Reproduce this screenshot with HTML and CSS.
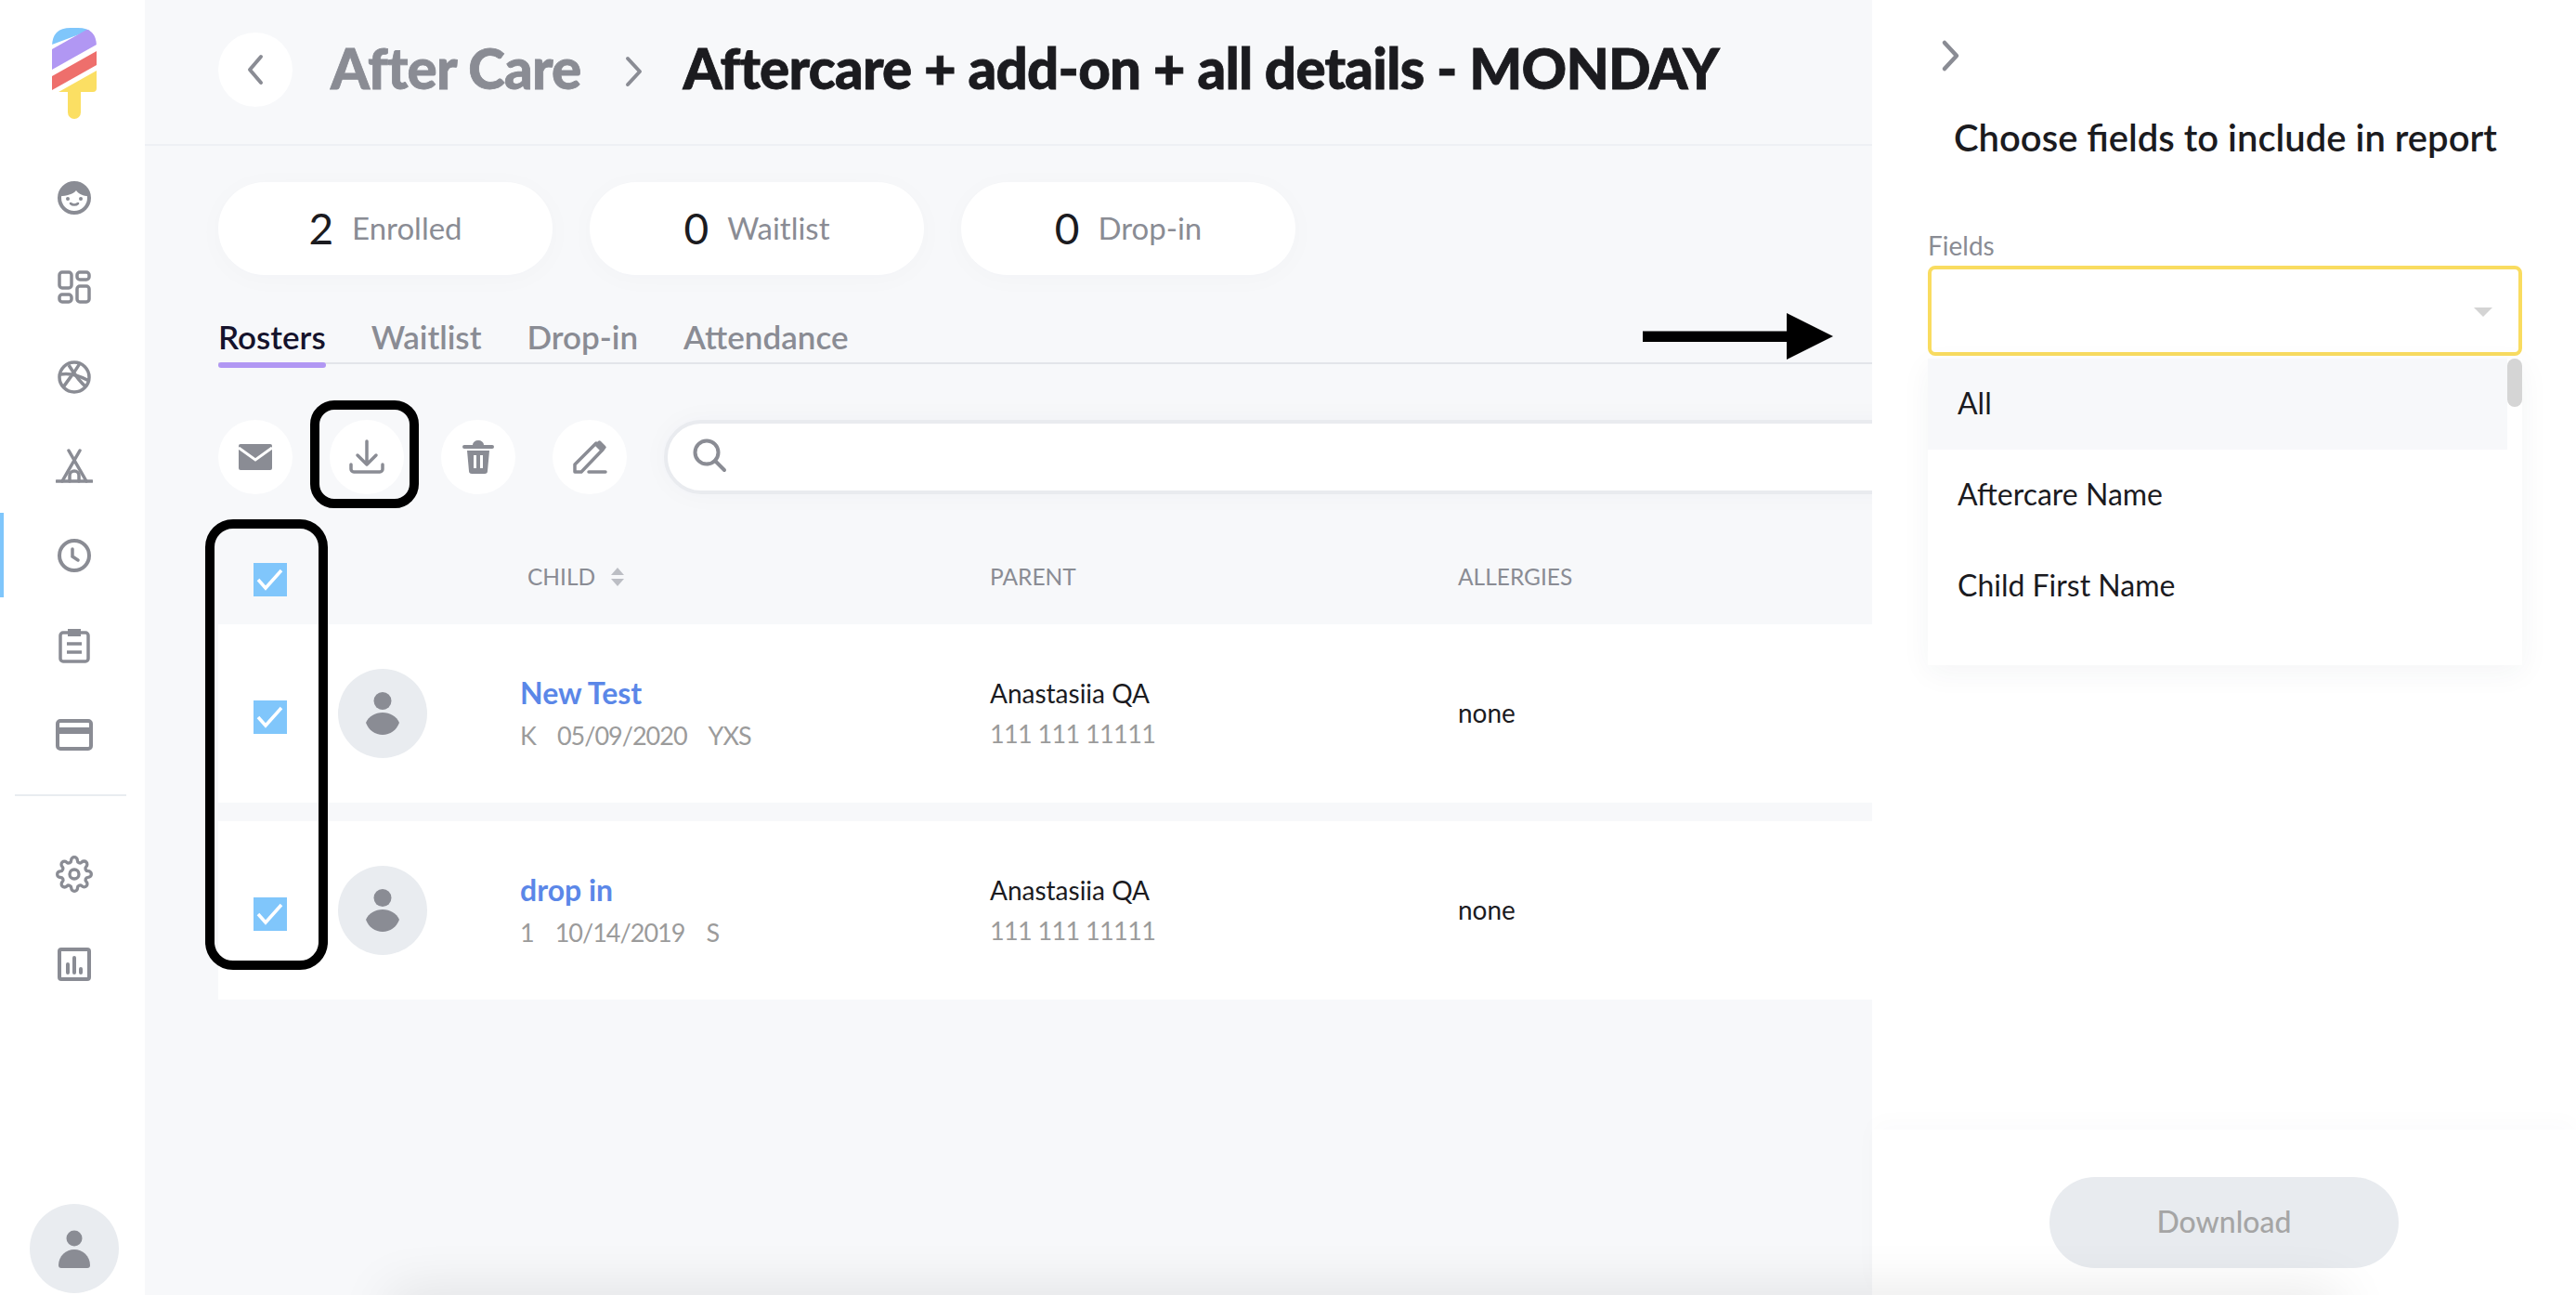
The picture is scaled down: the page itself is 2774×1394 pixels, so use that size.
FILE: index.html
```html
<!DOCTYPE html>
<html lang="en">
<head>
<meta charset="UTF-8">
<title>After Care</title>
<link rel="stylesheet" href="styles.css">
</head>
<body>
<svg class="defs" width="0" height="0">
  <symbol id="person" viewBox="0 0 36 46">
    <ellipse cx="18" cy="9.5" rx="9.5" ry="9.5" fill="currentColor"/>
    <path d="M0 33C3 26 10 22 18 22S33 26 36 33C33 41 26 46 18 46S3 41 0 33z" fill="currentColor"/>
  </symbol>
  <symbol id="check" viewBox="0 0 36 36">
    <path d="M5 18l8 9L30 8" fill="none" stroke="#fff" stroke-width="3.5"/>
  </symbol>
</svg>

<aside class="sidebar">
  <svg class="logo" width="48" height="98" viewBox="0 0 48 98">
    <defs><clipPath id="pop"><path d="M0 69V20Q0 0 20 0H28Q48 0 48 20V65Q48 69 44 69H31V91a7 7 0 0 1-14 0V69z"/></clipPath></defs>
    <g clip-path="url(#pop)">
      <polygon points="0,0 48,0 0,18" fill="#7fc6fb"/>
      <polygon points="0,23 48,-4 48,18 0,45" fill="#b197f3"/>
      <polygon points="0,52 48,25 48,40 0,67" fill="#ee6f6c"/>
      <polygon points="0,73 48,46 48,98 0,98" fill="#fbdf63"/>
    </g>
  </svg>
  <nav class="side-nav">
    <a class="side-item">
      <svg width="40" height="40" viewBox="0 0 40 40"><circle cx="20" cy="20" r="16" fill="none" stroke="currentColor" stroke-width="4"/><path d="M5 18C7 8 13 4 20 4s13 4 15 14c-5 0-10-2-13-6-3 4-11 6-17 6z" fill="currentColor"/><circle cx="13" cy="21" r="2" fill="currentColor"/><circle cx="27" cy="21" r="2" fill="currentColor"/><path d="M16 26c2 2 6 2 8 0" fill="none" stroke="currentColor" stroke-width="2.5" stroke-linecap="round"/></svg>
    </a>
    <a class="side-item">
      <svg width="40" height="40" viewBox="0 0 40 40"><g fill="none" stroke="currentColor" stroke-width="3.5"><rect x="4" y="4" width="13" height="17" rx="3"/><rect x="4" y="28" width="13" height="8" rx="3"/><rect x="23" y="4" width="13" height="8" rx="3"/><rect x="23" y="19" width="13" height="17" rx="3"/></g></svg>
    </a>
    <a class="side-item">
      <svg width="40" height="40" viewBox="0 0 40 40"><g fill="none" stroke="currentColor" stroke-width="3.5"><circle cx="20" cy="20" r="16"/><path d="M5 17c10-2 22 2 31 7M8 31C14 22 21 14 26 5"/><path d="M14 7c5 8 12 18 19 24"/></g></svg>
    </a>
    <a class="side-item">
      <svg width="40" height="40" viewBox="0 0 40 40"><g fill="none" stroke="currentColor" stroke-width="3.5" stroke-linecap="round"><path d="M1 36h38"/><path d="M14 3l19 33M26 3L7 36"/><path d="M15 36v-6a5 5 0 0 1 10 0v6"/></g></svg>
    </a>
    <a class="side-item active">
      <svg width="40" height="40" viewBox="0 0 40 40"><circle cx="20" cy="20" r="16" fill="none" stroke="currentColor" stroke-width="4"/><path d="M18 13v8l6 4" fill="none" stroke="currentColor" stroke-width="3.5" stroke-linecap="round"/></svg>
    </a>
    <a class="side-item">
      <svg width="40" height="40" viewBox="0 0 40 40"><g fill="none" stroke="currentColor" stroke-width="3.5"><rect x="5" y="6" width="30" height="31" rx="3"/><path d="M12 18h16M12 27h16"/></g><path d="M13 2h14v8H13z" fill="currentColor"/></svg>
    </a>
    <a class="side-item">
      <svg width="40" height="40" viewBox="0 0 40 40"><rect x="2" y="5" width="36" height="30" rx="3" fill="none" stroke="currentColor" stroke-width="4"/><path d="M2 12h36v7H2z" fill="currentColor"/></svg>
    </a>
  </nav>
  <div class="side-divider"></div>
  <nav class="side-nav">
    <a class="side-item">
      <svg width="40" height="40" viewBox="0 0 24 24" fill="none" stroke="currentColor" stroke-width="2"><circle cx="12" cy="12" r="3"/><path d="M19.4 15a1.65 1.65 0 0 0 .33 1.82l.06.06a2 2 0 0 1 0 2.83 2 2 0 0 1-2.83 0l-.06-.06a1.65 1.65 0 0 0-1.82-.33 1.65 1.65 0 0 0-1 1.51V21a2 2 0 0 1-2 2 2 2 0 0 1-2-2v-.09A1.65 1.65 0 0 0 9 19.4a1.65 1.65 0 0 0-1.82.33l-.06.06a2 2 0 0 1-2.83 0 2 2 0 0 1 0-2.83l.06-.06a1.65 1.65 0 0 0 .33-1.82 1.65 1.65 0 0 0-1.51-1H3a2 2 0 0 1-2-2 2 2 0 0 1 2-2h.09A1.65 1.65 0 0 0 4.6 9a1.65 1.65 0 0 0-.33-1.82l-.06-.06a2 2 0 0 1 0-2.83 2 2 0 0 1 2.83 0l.06.06a1.65 1.65 0 0 0 1.82.33H9a1.65 1.65 0 0 0 1-1.51V3a2 2 0 0 1 2-2 2 2 0 0 1 2 2v.09a1.65 1.65 0 0 0 1 1.51 1.65 1.65 0 0 0 1.82-.33l.06-.06a2 2 0 0 1 2.83 0 2 2 0 0 1 0 2.83l-.06.06a1.65 1.65 0 0 0-.33 1.82V9a1.65 1.65 0 0 0 1.51 1H21a2 2 0 0 1 2 2 2 2 0 0 1-2 2h-.09a1.65 1.65 0 0 0-1.51 1z"/></svg>
    </a>
    <a class="side-item">
      <svg width="40" height="40" viewBox="0 0 40 40"><rect x="4" y="4" width="32" height="32" rx="2" fill="none" stroke="currentColor" stroke-width="4"/><path d="M13 20v9M20 13v16M27 25v4" stroke="currentColor" stroke-width="4" stroke-linecap="round"/></svg>
    </a>
  </nav>
  <div class="side-user">
    <svg width="34" height="41" viewBox="0 0 34 41"><circle cx="17" cy="9" r="8.5" fill="currentColor"/><path d="M0 38C0 28 8 21 17 21S34 28 34 38Q34 41 31 41H3Q0 41 0 38z" fill="currentColor"/></svg>
  </div>
</aside>

<main class="main">
  <header class="top">
    <button class="round-btn">
      <svg width="24" height="36" viewBox="0 0 24 36"><path d="M18 4L6 18l12 14" fill="none" stroke="currentColor" stroke-width="4" stroke-linecap="round" stroke-linejoin="round"/></svg>
    </button>
    <h1 class="crumb-parent">After Care</h1>
    <svg class="crumb-sep" width="24" height="36" viewBox="0 0 24 36"><path d="M5 4l13 14L5 32" fill="none" stroke="currentColor" stroke-width="4" stroke-linecap="round" stroke-linejoin="round"/></svg>
    <h1 class="crumb-title">Aftercare + add-on + all details - MONDAY</h1>
  </header>

  <div class="stats">
    <div class="stat"><span class="stat-num">2</span><span class="stat-label">Enrolled</span></div>
    <div class="stat"><span class="stat-num">0</span><span class="stat-label">Waitlist</span></div>
    <div class="stat"><span class="stat-num">0</span><span class="stat-label">Drop-in</span></div>
  </div>

  <div class="tabs">
    <a class="tab active">Rosters</a>
    <a class="tab">Waitlist</a>
    <a class="tab">Drop-in</a>
    <a class="tab">Attendance</a>
  </div>

  <div class="toolbar">
    <button class="round-btn">
      <svg width="40" height="40" viewBox="0 0 40 40"><path d="M2 8a2 2 0 0 1 2-2h32a2 2 0 0 1 2 2v24a2 2 0 0 1-2 2H4a2 2 0 0 1-2-2z" fill="currentColor"/><path d="M2 10l18 13 18-13" fill="none" stroke="#fff" stroke-width="3"/></svg>
    </button>
    <button class="round-btn">
      <svg width="40" height="40" viewBox="0 0 40 40"><g fill="none" stroke="currentColor" stroke-width="3.5" stroke-linecap="round" stroke-linejoin="round"><path d="M20 3v24M10 18l10 10 10-10"/><path d="M3 28v5a3 3 0 0 0 3 3h28a3 3 0 0 0 3-3v-5"/></g></svg>
    </button>
    <button class="round-btn">
      <svg width="40" height="40" viewBox="0 0 40 40"><path d="M5 7h30a1.5 1.5 0 0 1 0 4H5a1.5 1.5 0 0 1 0-4zM14 7a6 5 0 0 1 12 0z" fill="currentColor"/><path d="M8 13h24l-2 22a3 3 0 0 1-3 3H13a3 3 0 0 1-3-3zM15 18v14h3V18zM22 18v14h3V18z" fill="currentColor" fill-rule="evenodd"/></svg>
    </button>
    <button class="round-btn">
      <svg width="40" height="40" viewBox="0 0 40 40"><path d="M4 36v-8L27 5l7 7-23 24z" fill="none" stroke="currentColor" stroke-width="3.5" stroke-linejoin="round"/><path d="M25 7l4-4a2 2 0 0 1 3 0l5 5a2 2 0 0 1 0 3l-4 4z" fill="currentColor"/><path d="M19 36h18" stroke="currentColor" stroke-width="3.5" stroke-linecap="round"/></svg>
    </button>
    <div class="search">
      <svg width="38" height="38" viewBox="0 0 38 38"><circle cx="16" cy="16" r="12.5" fill="none" stroke="currentColor" stroke-width="4"/><path d="M25 25l10 10" stroke="currentColor" stroke-width="4" stroke-linecap="round"/></svg>
    </div>
  </div>

  <div class="roster-head">
    <span class="check"><svg width="36" height="36"><use href="#check"/></svg></span>
    <span></span>
    <span class="col-title col-child">CHILD
      <svg width="16" height="22" viewBox="0 0 16 22"><path d="M8 1l7 8H1zM8 21l7-8H1z" fill="#bcbec4"/></svg>
    </span>
    <span class="col-title">PARENT</span>
    <span class="col-title">ALLERGIES</span>
  </div>

  <div class="roster-row">
    <span class="check"><svg width="36" height="36"><use href="#check"/></svg></span>
    <span class="avatar"><svg width="36" height="46"><use href="#person"/></svg></span>
    <div class="child">
      <a class="child-name">New Test</a>
      <div class="child-meta"><span>K</span><span>05/09/2020</span><span>YXS</span></div>
    </div>
    <div class="parent">
      <div class="parent-name">Anastasiia QA</div>
      <div class="parent-phone">111 111 11111</div>
    </div>
    <div class="allergy">none</div>
  </div>

  <div class="roster-row">
    <span class="check"><svg width="36" height="36"><use href="#check"/></svg></span>
    <span class="avatar"><svg width="36" height="46"><use href="#person"/></svg></span>
    <div class="child">
      <a class="child-name">drop in</a>
      <div class="child-meta"><span>1</span><span>10/14/2019</span><span>S</span></div>
    </div>
    <div class="parent">
      <div class="parent-name">Anastasiia QA</div>
      <div class="parent-phone">111 111 11111</div>
    </div>
    <div class="allergy">none</div>
  </div>
</main>

<aside class="panel">
  <div class="panel-body">
    <svg class="panel-back" width="24" height="36" viewBox="0 0 24 36"><path d="M5 4l13 14L5 32" fill="none" stroke="currentColor" stroke-width="4.5" stroke-linecap="round" stroke-linejoin="round"/></svg>
    <h2 class="panel-title">Choose fields to include in report</h2>
    <label class="field-label">Fields</label>
    <div class="select">
      <div class="select-box"><span class="caret"></span></div>
      <div class="dropdown">
        <div class="dropdown-list">
          <div class="option hover">All</div>
          <div class="option">Aftercare Name</div>
          <div class="option">Child First Name</div>
          <div class="option">Child Last Name</div>
        </div>
        <div class="scroll-track"><div class="scroll-thumb"></div></div>
      </div>
    </div>
  </div>
  <div class="panel-foot">
    <button class="download" disabled>Download</button>
  </div>
</aside>

<!-- annotations drawn on top of the screenshot -->
<div class="mark mark-download"></div>
<div class="mark mark-checks"></div>
<svg class="mark-arrow" width="205" height="50" viewBox="0 0 205 50"><path d="M0 19.500h155V0l50 25-50 25V31H0z" fill="#000"/></svg>
<div class="bottom-shade"></div>
</body>
</html>
```

FILE: styles.css
```css
* { box-sizing: border-box; }
html, body { height: 100%; }
body {
  margin: 0;
  display: flex;
  height: 1394px;
  overflow: hidden;
  position: relative;
  background: #f7f8fa;
  color: #1b1b1f;
  font-family: "Lato", "Noto Sans", sans-serif;
}
.defs { position: absolute; }
button { font-family: inherit; border: none; padding: 0; }

/* left nav */
.sidebar {
  width: 156px;
  flex-shrink: 0;
  background: #fff;
  display: flex;
  flex-direction: column;
  align-items: center;
  color: #8a8c94;
  padding: 30px 0 0 4px;
}
.logo { display: block; margin-bottom: 37px; }
.side-nav { width: 100%; display: flex; flex-direction: column; }
.side-item {
  height: 96.3px;
  display: flex;
  align-items: center;
  justify-content: center;
  position: relative;
}
.side-item.active::before {
  content: "";
  position: absolute;
  left: -4px;
  top: 2px;
  bottom: 3px;
  width: 4px;
  background: #7fc6fb;
}
.side-divider {
  width: 120px;
  height: 2px;
  margin: 16px 0 36px 12px;
  background: #e9ecf0;
  align-self: flex-start;
}
.side-user {
  margin-top: auto;
  margin-bottom: 2px;
  width: 96px;
  height: 96px;
  border-radius: 50%;
  background: #e9ecf0;
  display: flex;
  align-items: center;
  justify-content: center;
}

/* main column */
.main { flex: 1; min-width: 0; padding-left: 79px; }
.top {
  height: 157px;
  margin-left: -79px;
  padding: 0 0 6px 79px;
  display: flex;
  align-items: center;
  border-bottom: 2px solid #eef0f4;
}
.round-btn {
  width: 80px;
  height: 80px;
  flex-shrink: 0;
  border-radius: 50%;
  background: #fff;
  color: #8a8c94;
  display: flex;
  align-items: center;
  justify-content: center;
}
.crumb-parent, .crumb-title {
  margin: 0 0 4px;
  font-size: 60px;
  font-weight: 900;
  line-height: 1;
  white-space: nowrap;
  letter-spacing: -0.75px;
  -webkit-text-stroke: 0.8px currentColor;
}
.crumb-parent { color: #8a8c94; margin-left: 41px; }
.crumb-sep { color: #8a8c94; margin: 4px 41px 0 45px; flex-shrink: 0; }

.stats { display: flex; gap: 40px; margin-top: 39px; }
.stat {
  width: 360px;
  height: 100px;
  border-radius: 50px;
  background: #fff;
  box-shadow: 0 4px 30px rgba(40, 50, 80, 0.025);
  display: flex;
  align-items: center;
  justify-content: center;
  gap: 20px;
}
.stat-num { font-size: 46px; line-height: 1; }
.stat-label { font-size: 33px; color: #8a8c94; padding-bottom: 2px; }

.tabs {
  display: flex;
  gap: 49px;
  margin-top: 47px;
  height: 49px;
  border-bottom: 2px solid #e3e5e9;
}
.tab {
  position: relative;
  margin-top: -3px;
  height: 44px;
  font-size: 35px;
  line-height: 44px;
  font-weight: 600;
  color: #8a8c94;
}
.tab.active { color: #15132c; }
.tab.active::after {
  content: "";
  position: absolute;
  left: 0;
  right: 0;
  top: 50px;
  height: 6px;
  border-radius: 3px;
  background: #b197f3;
}

.toolbar { display: flex; gap: 40px; margin-top: 60px; }
.search {
  flex: 1;
  height: 80px;
  margin-right: -40px;
  border: 4px solid #e9ebef;
  border-radius: 40px 0 0 40px;
  background: #fff;
  box-shadow: 0 0 30px rgba(40, 50, 80, 0.03);
  color: #8a8c94;
  display: flex;
  align-items: center;
  padding-left: 26px;
}
.search svg { margin-bottom: 4px; }

/* roster table */
.roster-head, .roster-row {
  display: grid;
  padding-left: 38px;
  grid-template-columns: 91px 196px 506px 504px 1fr;
}
.roster-head {
  height: 140px;
  align-items: end;
  padding-bottom: 30px;
}
.check {
  width: 36px;
  height: 36px;
  background: #80c6fb;
  display: block;
}
.check svg { display: block; }
.roster-row .check { margin-top: 8px; }
.col-title {
  margin-bottom: 3px;
  font-size: 24.5px;
  line-height: 36px;
  color: #8a8c94;
  display: flex;
  align-items: center;
  gap: 16px;
}
.col-child { padding-left: 8px; }
.roster-row {
  height: 192px;
  margin-bottom: 20px;
  background: #fff;
  align-items: center;
}
.avatar {
  width: 96px;
  height: 96px;
  border-radius: 50%;
  background: #e9ecf0;
  color: #8a8c94;
  display: flex;
  align-items: center;
  justify-content: center;
}
.child-name {
  display: block;
  font-size: 32px;
  line-height: 40px;
  font-weight: 700;
  color: #5b87e8;
}
.child-meta {
  display: flex;
  gap: 23px;
  margin-top: 8px;
  font-size: 27px;
  letter-spacing: -1px;
  line-height: 36px;
  color: #9b9b9b;
}
.parent-name { font-size: 28px; line-height: 36px; }
.parent-phone { font-size: 27px; letter-spacing: -0.6px; line-height: 36px; margin-top: 8px; color: #9b9b9b; }
.allergy { font-size: 28px; margin-top: -2px; }

/* right panel */
.panel {
  width: 758px;
  flex-shrink: 0;
  position: relative;
  background: #fff;
  display: flex;
  flex-direction: column;
}
.panel-body { flex: 1; padding: 42px 58px 0 60px; }
.panel-back { display: block; margin-left: 13px; color: #8a8c94; }
.panel-title {
  margin: 45px 0 0 28px;
  font-size: 40px;
  line-height: 50px;
  font-weight: 600;
  white-space: nowrap;
}
.field-label {
  display: block;
  margin-top: 73px;
  font-size: 28px;
  line-height: 36px;
  color: #8a8c94;
}
.select { position: relative; margin-top: 4px; }
.select-box {
  height: 97px;
  border: 4px solid #f9dc60;
  border-radius: 8px;
  display: flex;
  align-items: center;
  justify-content: flex-end;
  padding-right: 28px;
}
.caret {
  margin-top: 2px;
  border-left: 10px solid transparent;
  border-right: 10px solid transparent;
  border-top: 10px solid #d4d4d4;
}
.dropdown {
  position: absolute;
  left: 0;
  right: 0;
  top: 100px;
  height: 330px;
  display: flex;
  background: #fff;
  overflow: hidden;
  box-shadow: 0 8px 30px rgba(40, 50, 80, 0.05);
}
.dropdown-list { flex: 1; }
.option {
  height: 98px;
  padding-left: 32px;
  font-size: 32px;
  line-height: 96px;
}
.option.hover { background: #f7f8fa; }
.scroll-track { width: 16px; }
.scroll-thumb { height: 52px; border-radius: 8px; background: #d5d5d5; }
.panel-foot {
  height: 178px;
  background: #fff;
  padding-top: 51px;
  display: flex;
  justify-content: center;
  align-items: flex-start;
  box-shadow: 0 -8px 24px rgba(40, 50, 80, 0.02);
  position: relative;
}
.download {
  width: 376px;
  height: 98px;
  padding-bottom: 3px;
  border-radius: 49px;
  background: #e8ebef;
  color: #a5a5a5;
  font-size: 32px;
  font-weight: 500;
}

/* black callouts */
.mark {
  position: absolute;
  border: 10px solid #000;
  pointer-events: none;
}
.mark-download { left: 334px; top: 431px; width: 117px; height: 116px; border-radius: 26px; }
.mark-checks { left: 221px; top: 559px; width: 132px; height: 485px; border-radius: 30px; }
.mark-arrow { position: absolute; left: 1769px; top: 337px; }
.bottom-shade {
  position: absolute;
  left: 420px;
  width: 2100px;
  top: 1394px;
  height: 40px;
  box-shadow: 0 0 60px rgba(0, 0, 0, 0.12);
}
```
